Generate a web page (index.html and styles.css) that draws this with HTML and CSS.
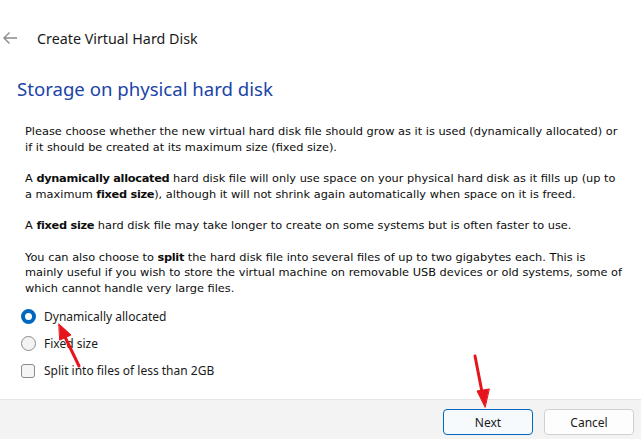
FILE: index.html
```html
<!DOCTYPE html>
<html>
<head>
<meta charset="utf-8">
<title>Create Virtual Hard Disk</title>
<link rel="stylesheet" href="styles.css">
</head>
<body>
<div class="page">
  <header class="header">
    <svg class="back" width="16" height="14" viewBox="0 0 16 14"><path d="M15 7H2M7.5 1.5L2 7l5.5 5.5" fill="none" stroke="#8a8a8a" stroke-width="1.4"/></svg>
    <span class="header-title">Create Virtual Hard Disk</span>
  </header>
  <main class="main">
    <h1 class="title">Storage on physical hard disk</h1>
    <div class="text">
      <p>Please choose whether the new virtual hard disk file should grow as it is used (dynamically allocated) or<br>if it should be created at its maximum size (fixed size).</p>
      <p>A <b>dynamically allocated</b> hard disk file will only use space on your physical hard disk as it fills up (up to<br>a maximum <b>fixed size</b>), although it will not shrink again automatically when space on it is freed.</p>
      <p>A <b>fixed size</b> hard disk file may take longer to create on some systems but is often faster to use.</p>
      <p>You can also choose to <b>split</b> the hard disk file into several files of up to two gigabytes each. This is<br>mainly useful if you wish to store the virtual machine on removable USB devices or old systems, some of<br>which cannot handle very large files.</p>
    </div>
    <div class="options">
      <label class="opt"><span class="radio checked"></span>Dynamically allocated</label>
      <label class="opt"><span class="radio"></span>Fixed size</label>
      <label class="opt"><span class="check"></span>Split into files of less than 2GB</label>
    </div>
  </main>
  <footer class="footer">
    <button class="btn primary">Next</button>
    <button class="btn">Cancel</button>
  </footer>
  <svg class="arrows" width="641" height="439" viewBox="0 0 641 439">
    <g stroke="#e8141c" stroke-width="3" fill="#e8141c" stroke-linecap="round">
      <line x1="79" y1="366" x2="65" y2="337"/>
      <polygon points="59,324 71,335 60,340" stroke-width="1"/>
      <line x1="475" y1="356" x2="482" y2="392"/>
      <polygon points="485,407 477,391 489,389" stroke-width="1"/>
    </g>
  </svg>
</div>
</body>
</html>
```
FILE: styles.css
```css
html, body {
  margin: 0;
  padding: 0;
  background: #ffffff;
}
.page {
  position: relative;
  width: 641px;
  height: 439px;
  overflow: hidden;
  display: flex;
  flex-direction: column;
  font-family: "Noto Sans", "Open Sans", sans-serif;
  color: #1a1a1a;
}
.header {
  height: 76px;
  display: flex;
  align-items: center;
  box-sizing: border-box;
  padding-left: 2px;
}
.back {
  margin-right: 19px;
}
.header-title {
  font-size: 14.3px;
  color: #1a1a1a;
}
.main {
  flex: 1;
  padding-left: 17px;
  padding-right: 10px;
}
.title {
  margin: 0;
  font-weight: normal;
  font-size: 18.6px;
  line-height: 26px;
  color: #1a44a8;
}
.text {
  padding-left: 8px;
  margin-top: 22px;
  font-family: "DejaVu Sans", sans-serif;
  font-size: 11.35px;
  line-height: 15.7px;
  letter-spacing: 0;
  color: #0d0d0d;
}
.text p {
  margin: 0 0 15.7px 0;
  white-space: nowrap;
}
.text b {
  font-weight: bold;
  letter-spacing: -0.3px;
}
.options {
  margin-top: -9px;
  padding-left: 4px;
  display: flex;
  flex-direction: column;
}
.opt {
  height: 27px;
  display: flex;
  align-items: center;
  font-size: 12px;
  color: #1a1a1a;
}
.radio {
  width: 15px;
  height: 15px;
  box-sizing: border-box;
  border-radius: 50%;
  border: 1px solid #8c8c8c;
  background: #f3f3f3;
  margin-right: 8px;
}
.radio.checked {
  border: 4.5px solid #0067c0;
  background: #ffffff;
}
.check {
  width: 14px;
  height: 14px;
  box-sizing: border-box;
  border-radius: 3px;
  border: 1px solid #8c8c8c;
  background: #f5f5f5;
  margin-right: 9px;
}
.footer {
  height: 40px;
  box-sizing: border-box;
  background: #f3f3f3;
  border-top: 1px solid #e5e5e5;
  display: flex;
  justify-content: flex-end;
  align-items: flex-start;
  gap: 11px;
  padding: 9px 7px 0 0;
}
.btn {
  width: 90px;
  height: 26px;
  font-family: "Noto Sans", sans-serif;
  font-size: 12px;
  color: #1a1a1a;
  background: #fdfdfd;
  border: 1px solid #d0d0d0;
  border-radius: 4px;
  padding: 0;
}
.btn.primary {
  border-color: #0067c0;
  background: #f6fafd;
}
.arrows {
  position: absolute;
  left: 0;
  top: 0;
  pointer-events: none;
}
```
